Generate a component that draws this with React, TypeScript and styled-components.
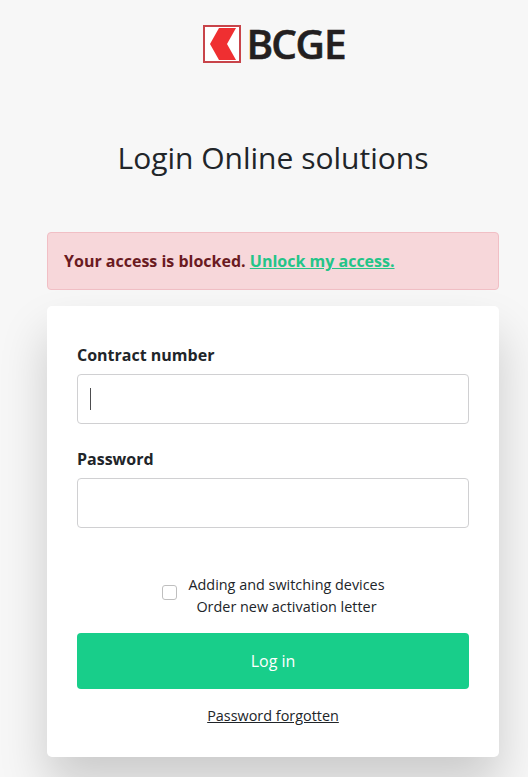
import React from "react";
import styled, { createGlobalStyle } from "styled-components";

const GlobalStyle = createGlobalStyle`
  * { box-sizing: border-box; }
  html, body { margin: 0; height: 100%; background: #f7f7f7; overflow: hidden; }
  body { font-family: "Open Sans", sans-serif; font-size: 16px; line-height: 24px; color: #212529; }
`;

const Page = styled.main`
  width: 528px;
  height: 777px;
  padding: 24px 29px 0 47px;
  display: flex;
  flex-direction: column;
  background: #f7f7f7;
  overflow: hidden;
`;

const Brand = styled.header`
  display: flex;
  height: 40px;
  padding-left: 156px;
`;

const Logo = styled.svg`
  display: block;
  width: 150px;
  height: 40px;
  overflow: visible;
`;

const Title = styled.h1`
  margin: 76px 0 0;
  height: 36px;
  font-size: 30px;
  line-height: 36px;
  font-weight: 400;
  text-align: center;
  white-space: nowrap;
`;

const Alert = styled.div`
  margin-top: 56px;
  height: 58px;
  padding: 16px;
  border: 1px solid #f1bfc5;
  border-radius: 4px;
  background: #f7d7da;
  color: #6a1a21;
  font-weight: 700;
`;

const AlertLink = styled.a`
  color: #24c488;
  text-decoration: underline;
`;

const Card = styled.form`
  margin-top: 16px;
  height: 451px;
  padding: 37px 30px 0;
  display: flex;
  flex-direction: column;
  background: #fff;
  border-radius: 5px;
  box-shadow: 0 28px 48px rgba(0, 0, 0, 0.18);
`;

const Field = styled.label`
  display: flex;
  flex-direction: column;
  gap: 7px;
  height: 104px;
  font-weight: 700;
`;

const Input = styled.div`
  height: 50px;
  padding: 13px 12px;
  border: 1px solid #d0d0d2;
  border-radius: 4px;
`;

const Caret = styled.span`
  display: block;
  width: 1px;
  height: 22px;
  background: #4d4d4f;
`;

const Option = styled.label`
  display: flex;
  justify-content: center;
  align-items: flex-start;
  gap: 11.5px;
  margin-top: 23px;
  height: 44px;
  font-size: 14.4px;
  line-height: 22px;
  text-align: center;
`;

const Check = styled.span`
  width: 15px;
  height: 15px;
  margin: 11px 0 0 0.5px;
  border: 1px solid #bfbfbf;
  border-radius: 3px;
`;

const Submit = styled.button`
  margin-top: 15px;
  height: 56px;
  flex: none;
  border: 0;
  border-radius: 4px;
  background: #18ce8a;
  color: #fff;
  font: 400 16px/24px "Open Sans", sans-serif;
`;

const Forgotten = styled.a`
  margin-top: 16px;
  align-self: center;
  font-size: 14.4px;
  line-height: 22px;
  text-decoration: underline;
`;

export default function App() {
  return (
    <>
      <GlobalStyle />
      <Page>
        <Brand>
          <Logo viewBox="0 0 150 40" role="img" aria-label="BCGE">
            <rect x="1" y="2" width="36" height="36" fill="#fff" stroke="#c8444a" strokeWidth="2" />
            <path d="M16 4H33L24 20L33 36H16L7 20Z" fill="#ef2f31" />
            <text x="43.6 68.2 92.6 120.9" y="35" fontFamily="Open Sans" fontSize="40.5" fontWeight="600" fill="#231f20" stroke="#231f20" strokeWidth="0.6">BCGE</text>
          </Logo>
        </Brand>
        <Title>Login Online solutions</Title>
        <Alert>
          Your access is blocked. <AlertLink>Unlock my access.</AlertLink>
        </Alert>
        <Card>
          <Field>Contract number<Input><Caret /></Input></Field>
          <Field>Password<Input /></Field>
          <Option>
            <Check />
            <span>Adding and switching devices<br />Order new activation letter</span>
          </Option>
          <Submit type="button">Log in</Submit>
          <Forgotten>Password forgotten</Forgotten>
        </Card>
      </Page>
    </>
  );
}
